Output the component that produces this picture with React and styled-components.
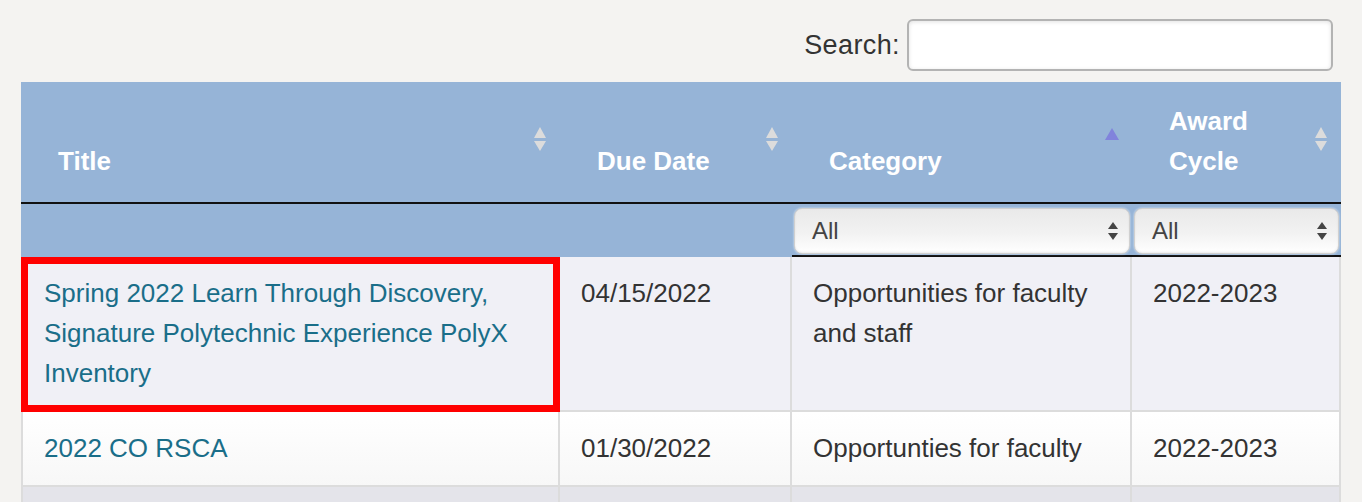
import React from "react";
import styled, { createGlobalStyle } from "styled-components";

const Global = createGlobalStyle`
  html, body { margin: 0; padding: 0; background: #f4f3f1; }
  body { font-family: "Liberation Sans", Arial, sans-serif; color: #333; }
`;

const Page = styled.div`
  padding: 19px 21px 0 21px;
  display: flex;
  flex-direction: column;
`;

const SearchBar = styled.div`
  display: flex;
  justify-content: flex-end;
  align-items: center;
  gap: 7px;
  padding-right: 8px;
  margin-bottom: 11px;
`;

const SearchLabel = styled.label`
  font-size: 27px;
  letter-spacing: 0.4px;
  color: #333;
`;

const SearchInput = styled.input`
  box-sizing: border-box;
  width: 426px;
  height: 52px;
  border: 2px solid #b3b3b3;
  border-radius: 6px;
  background: #fff;
  box-shadow: inset 0 1px 4px rgba(0, 0, 0, 0.12);
  outline: none;
`;

const Table = styled.table`
  width: 1320px;
  table-layout: fixed;
  border-collapse: separate;
  border-spacing: 0;
  font-size: 26px;
  line-height: 40px;
`;

const HeadCell = styled.th`
  position: relative;
  background: #96b4d7;
  color: #fff;
  font-weight: bold;
  font-size: 26px;
  text-align: left;
  vertical-align: bottom;
  padding: 19px 50px 21px 37px;
  border-bottom: 2px solid #111;
`;

const SortIcon = styled.svg`
  position: absolute;
  right: 12px;
  top: 44px;
  width: 16px;
  height: 26px;
`;

const FilterCell = styled.th`
  background: #96b4d7;
  padding: 4px 2px 1px 2px;
  height: 46px;
  border-bottom: 2px solid ${(p) => (p.$ruled ? "#111" : "#96b4d7")};
`;

const SelectBox = styled.div`
  box-sizing: border-box;
  height: 46px;
  border-radius: 8px;
  border: 1px solid #d0d0d0;
  background: linear-gradient(#e9e9e9, #f2f2f2 55%, #ffffff);
  box-shadow: inset 0 -1px 2px rgba(0, 0, 0, 0.08), 0 0 2px rgba(255, 255, 255, 0.8);
  display: flex;
  align-items: center;
  justify-content: space-between;
  padding: 0 10px 0 17px;
  font-weight: normal;
  font-size: 24px;
  color: #444;
  text-align: left;
`;

const Arrows = styled.svg`
  width: 12px;
  height: 22px;
`;

const Row = styled.tr`
  background: ${(p) =>
    p.$tone === "odd"
      ? "#f0f0f6"
      : p.$tone === "shade"
      ? "#e4e4ea"
      : "linear-gradient(#ffffff, #f7f7f7)"};
`;

const Cell = styled.td`
  vertical-align: top;
  height: 40px;
  padding: 16px 12px 17px 21px;
  color: #333;
  border-right: 2px solid #dcdcdc;
  border-bottom: 2px solid #dcdcdc;
  ${(p) => (p.$first ? "border-left: 2px solid #dcdcdc;" : "")}
  ${(p) =>
    p.$highlight
      ? "outline: 7px solid #ff0000; outline-offset: -7px;"
      : ""}
`;

const TitleLink = styled.a`
  color: #1a6e89;
  text-decoration: none;
`;

function Sort({ active }) {
  if (active) {
    return (
      <SortIcon viewBox="0 0 16 26">
        <polygon points="1,14 8,2 15,14" fill="#8183dc" />
      </SortIcon>
    );
  }
  return (
    <SortIcon viewBox="0 0 16 26">
      <polygon points="2,12 8,1 14,12" fill="#dcdcdc" />
      <polygon points="2,15 14,15 8,25" fill="#dcdcdc" />
    </SortIcon>
  );
}

function Select() {
  return (
    <SelectBox>
      <span>All</span>
      <Arrows viewBox="0 0 12 22">
        <polygon points="1,9 6,2 11,9" fill="#444" />
        <polygon points="1,13 11,13 6,20" fill="#444" />
      </Arrows>
    </SelectBox>
  );
}

const rows = [
  {
    id: 1,
    title: "Spring 2022 Learn Through Discovery, Signature Polytechnic Experience PolyX Inventory",
    due: "04/15/2022",
    cat: "Opportunities for faculty and staff",
    cycle: "2022-2023",
    tone: "odd",
    highlight: true,
  },
  {
    id: 2,
    title: "2022 CO RSCA",
    due: "01/30/2022",
    cat: "Opportunties for faculty",
    cycle: "2022-2023",
    tone: "even",
  },
  {
    id: 3,
    title: "",
    due: "",
    cat: "",
    cycle: "",
    tone: "shade",
  },
];

export default function App() {
  return (
    <>
      <Global />
      <Page>
        <SearchBar>
          <SearchLabel htmlFor="search">Search:</SearchLabel>
          <SearchInput id="search" type="text" />
        </SearchBar>
        <Table>
          <colgroup>
            <col style={{ width: 539 }} />
            <col style={{ width: 232 }} />
            <col style={{ width: 340 }} />
            <col style={{ width: 209 }} />
          </colgroup>
          <thead>
            <tr>
              <HeadCell>
                Title
                <Sort />
              </HeadCell>
              <HeadCell>
                Due Date
                <Sort />
              </HeadCell>
              <HeadCell>
                Category
                <Sort active />
              </HeadCell>
              <HeadCell>
                Award Cycle
                <Sort />
              </HeadCell>
            </tr>
            <tr>
              <FilterCell />
              <FilterCell />
              <FilterCell $ruled>
                <Select />
              </FilterCell>
              <FilterCell $ruled>
                <Select />
              </FilterCell>
            </tr>
          </thead>
          <tbody>
            {rows.map((r) => (
              <Row key={r.id} $tone={r.tone}>
                <Cell $first $highlight={r.highlight}>
                  {r.title && <TitleLink href="#">{r.title}</TitleLink>}
                </Cell>
                <Cell>{r.due}</Cell>
                <Cell>{r.cat}</Cell>
                <Cell>{r.cycle}</Cell>
              </Row>
            ))}
          </tbody>
        </Table>
      </Page>
    </>
  );
}
